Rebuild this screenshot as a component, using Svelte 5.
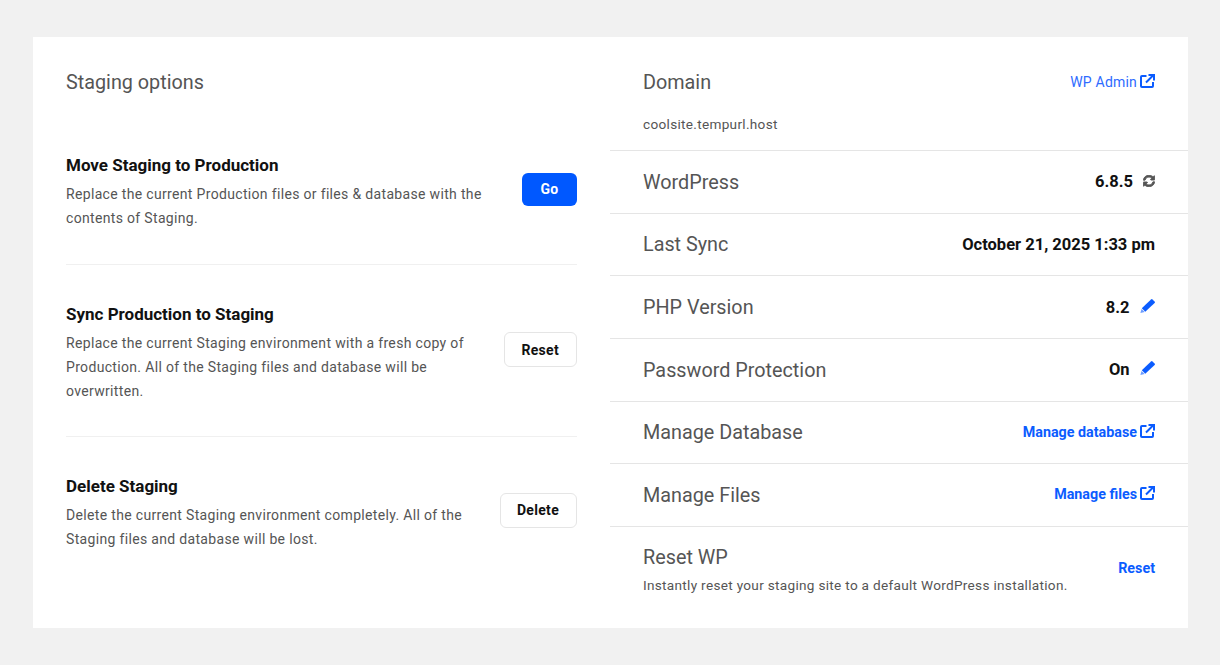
<script>
  const options = [
    { title: 'Move Staging to Production', text: 'Replace the current Production files or files & database with the contents of Staging.', action: 'Go', primary: true },
    { title: 'Sync Production to Staging', text: 'Replace the current Staging environment with a fresh copy of Production. All of the Staging files and database will be overwritten.', action: 'Reset' },
    { title: 'Delete Staging', text: 'Delete the current Staging environment completely. All of the Staging files and database will be lost.', action: 'Delete' }
  ];
</script>

<div class="page">
  <div class="card">
    <section class="left">
      <h2 class="heading">Staging options</h2>
      {#each options as opt}
        <div class="option">
          <div class="option-text">
            <h3>{opt.title}</h3>
            <p>{opt.text}</p>
          </div>
          <button class="btn" class:primary={opt.primary}>{opt.action}</button>
        </div>
      {/each}
    </section>

    <section class="right">
      <div class="row domain">
        <div class="line">
          <span class="label">Domain</span>
          <a class="link light" href="#wp">WP Admin {@render ext()}</a>
        </div>
        <div class="host">coolsite.tempurl.host</div>
      </div>
      <div class="row">
        <span class="label">WordPress</span>
        <span class="value">6.8.5
          <svg class="sync" viewBox="0 0 512 512" width="12" height="12"><path fill="#555" stroke="#555" stroke-width="36" d="M370.7 133.3C339.5 104 298.9 88 256 88c-77.400 0-143.500 53.100-161.900 126.700-1.300 5.400-6.100 9.300-11.700 9.300H24.100c-7.500 0-13.200-6.800-11.800-14.200C34.300 94.800 135.100 8 256 8c66.300 0 126.500 26.100 170.900 68.500L463 40.400C478.100 25.300 504 36 504 57.400V192c0 13.300-10.700 24-24 24H345.400c-21.400 0-32.100-25.900-17-41l42.300-41.700zM32 296h134.600c21.400 0 32.100 25.900 17 41l-42.300 41.700C172.500 408 213.100 424 256 424c77.400 0 143.500-53.100 161.900-126.700 1.300-5.400 6.100-9.300 11.700-9.300h58.300c7.500 0 13.200 6.800 11.800 14.200C477.700 417.200 376.900 504 256 504c-66.300 0-126.500-26.100-170.900-68.500L49 471.600C33.900 486.700 8 476 8 454.600V320c0-13.300 10.700-24 24-24z"/></svg>
        </span>
      </div>
      <div class="row">
        <span class="label">Last Sync</span>
        <span class="value">October 21, 2025 1:33 pm</span>
      </div>
      <div class="row">
        <span class="label">PHP Version</span>
        <span class="value">8.2 {@render pencil()}</span>
      </div>
      <div class="row">
        <span class="label">Password Protection</span>
        <span class="value">On {@render pencil()}</span>
      </div>
      <div class="row">
        <span class="label">Manage Database</span>
        <a class="link" href="#db">Manage database {@render ext()}</a>
      </div>
      <div class="row">
        <span class="label">Manage Files</span>
        <a class="link" href="#files">Manage files {@render ext()}</a>
      </div>
      <div class="row reset">
        <div>
          <div class="label">Reset WP</div>
          <div class="hint">Instantly reset your staging site to a default WordPress installation.</div>
        </div>
        <a class="link" href="#reset">Reset</a>
      </div>
    </section>
  </div>
</div>

{#snippet ext()}
  <svg class="ext" viewBox="0 0 15 14" width="15" height="14" fill="none" stroke="#0b5cff" stroke-width="2">
    <path d="M6.500 2H2a1 1 0 0 0-1 1v9a1 1 0 0 0 1 1h10a1 1 0 0 0 1-1V8"/>
    <path d="M6 8.500 13.500 1M8.500 1H14v5.500"/>
  </svg>
{/snippet}

{#snippet pencil()}
  <svg class="pencil" viewBox="0 0 15 14" width="15" height="14">
    <path fill="#0b5cff" d="M11 .4a1.100 1.100 0 0 1 1.500 0l2.100 2a1.100 1.100 0 0 1 0 1.500L5.300 12.700 1.800 9.300z"/>
    <path fill="#0b5cff" opacity=".6" d="M1.500 9.900 4.700 13 .4 14z"/>
  </svg>
{/snippet}

<style>
  :global(body) {
    margin: 0;
    background: #f1f1f1;
    font-family: Roboto, "Liberation Sans", sans-serif;
  }

  .page {
    padding: 37px 32px 37px 33px;
  }

  .card {
    display: grid;
    grid-template-columns: 577px 578px;
    height: 591px;
    background: #fff;
  }

  .left {
    padding: 0 33px;
  }

  .heading {
    margin: 0;
    padding-top: 33px;
    font-size: 19.8px;
    line-height: 26px;
    font-weight: 400;
    color: #555;
  }

  .option {
    display: flex;
    align-items: center;
    justify-content: space-between;
    gap: 16px;
    padding: 38px 0 33.5px;
    border-bottom: 1px solid #f0f0f0;
  }

  .heading + .option {
    margin-top: 20px;
  }

  .option:last-child {
    border-bottom: none;
  }

  .option h3 {
    margin: 0 0 6px;
    font-size: 17px;
    line-height: 22px;
    font-weight: 700;
    color: #111;
  }

  .option p {
    margin: 0;
    font-size: 14px;
    line-height: 24px;
    letter-spacing: 0.33px;
    color: #555;
  }

  .option-text {
    max-width: 425px;
  }

  .btn {
    flex: none;
    height: 35px;
    margin-bottom: 5.5px;
    padding: 0 17px 0 16px;
    border: 1px solid #e5e5e5;
    border-radius: 6px;
    background: #fff;
    color: #111;
    font: 700 14px Roboto, sans-serif;
    letter-spacing: 0.3px;
  }

  .btn.primary {
    height: 33px;
    padding: 0 18.5px;
    border: none;
    background: #0058ff;
    color: #fff;
  }

  .row {
    display: flex;
    align-items: center;
    justify-content: space-between;
    height: 61.7px;
    padding: 0 33px;
    border-bottom: 1px solid #e5e5e5;
  }

  .row.domain {
    display: block;
    height: auto;
    padding-top: 31px;
    padding-bottom: 16px;
  }

  .row.reset {
    border-bottom: none;
    height: 80px;
    align-items: flex-start;
    padding-top: 16px;
  }

  .line {
    display: flex;
    align-items: center;
    justify-content: space-between;
  }

  .label {
    padding-top: 1.5px;
    font-size: 19.8px;
    line-height: 26px;
    color: #555;
  }

  .host {
    margin-top: 18.5px;
    font-size: 13.6px;
    line-height: 20px;
    letter-spacing: 0.3px;
    color: #555;
  }

  .hint {
    margin-top: 4.5px;
    font-size: 13.6px;
    line-height: 20px;
    letter-spacing: 0.3px;
    color: #555;
  }

  .value {
    display: flex;
    align-items: center;
    gap: 10.5px;
    font-size: 16.5px;
    font-weight: 700;
    color: #111;
  }

  .pencil {
    margin-bottom: 3px;
  }

  .sync {
    margin: 0 0 2px -0.5px;
  }

  .link {
    display: inline-flex;
    align-items: center;
    gap: 3px;
    margin-bottom: 2px;
    font-size: 14.3px;
    font-weight: 700;
    color: #0b5cff;
    text-decoration: none;
  }

  .ext {
    margin-bottom: 2px;
  }

  .link.light {
    margin-bottom: 0;
    font-size: 14px;
    font-weight: 400;
    letter-spacing: 0.2px;
    color: #2e6bff;
  }

  .reset .link {
    margin-top: 17px;
  }
</style>
